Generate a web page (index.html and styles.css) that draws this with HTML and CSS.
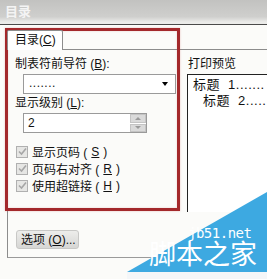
FILE: index.html
```html
<!DOCTYPE html>
<html lang="zh">
<head>
<meta charset="utf-8">
<link rel="stylesheet" href="styles.css">
</head>
<body>
<div class="dialog">
  <div class="titlebar">目录</div>
  <div class="client">
    <div class="tab-strip">
      <div class="tab">目录(<u>C</u>)</div>
    </div>
    <div class="tab-panel">
      <div class="columns">
        <div class="options">
          <div class="label">制表符前导符 (<u>B</u>):</div>
          <div class="select"><span class="select-text">.......</span><span class="arrow"></span></div>
          <div class="label label-2">显示级别 (<u>L</u>):</div>
          <div class="spin">
            <span class="spin-text">2</span>
            <div class="spin-btns">
              <div class="spin-btn"><span class="up"></span></div>
              <div class="spin-btn"><span class="down"></span></div>
            </div>
          </div>
          <div class="checks">
            <div class="check-row"><span class="box"><svg width="9" height="9" viewBox="0 0 9 9"><path d="M1 4.5 L3.5 7 L8 1.5" fill="none" stroke="#a6a6a6" stroke-width="1.6"/></svg></span>显示页码 (<u>S</u>)</div>
            <div class="check-row"><span class="box"><svg width="9" height="9" viewBox="0 0 9 9"><path d="M1 4.5 L3.5 7 L8 1.5" fill="none" stroke="#a6a6a6" stroke-width="1.6"/></svg></span>页码右对齐 (<u>R</u>)</div>
            <div class="check-row"><span class="box"><svg width="9" height="9" viewBox="0 0 9 9"><path d="M1 4.5 L3.5 7 L8 1.5" fill="none" stroke="#a6a6a6" stroke-width="1.6"/></svg></span>使用超链接 (<u>H</u>)</div>
          </div>
        </div>
        <div class="preview">
          <div class="label">打印预览</div>
          <div class="preview-box">
            <div class="toc-1">标题 1.......</div>
            <div class="toc-2">标题 2.....</div>
          </div>
        </div>
      </div>
      <div class="buttons">
        <div class="btn">选项 (<u>O</u>)...</div>
      </div>
    </div>
  </div>
  <div class="highlight"></div>
  <div class="watermark">
    <svg class="wm-shape" width="140" height="87" viewBox="0 0 140 87"><polygon points="0,80 140,0 140,80" fill="#3da9e1"/><rect x="0" y="80" width="140" height="7" fill="#f4f6f8"/></svg>
    <div class="wm-site">jb51.net</div>
    <div class="wm-name">脚本之家</div>
  </div>
</div>
</body>
</html>
```

FILE: styles.css
```css
* { box-sizing: border-box; }
html, body { margin: 0; padding: 0; }
body {
  width: 267px;
  height: 279px;
  overflow: hidden;
  background: #fbfbf9;
  font-family: "Liberation Sans", "Noto Sans CJK SC", sans-serif;
  font-size: 12px;
  color: #111;
}
u { text-decoration: underline; }
.dialog {
  position: relative;
  width: 267px;
  height: 279px;
  overflow: hidden;
}
.titlebar {
  height: 25px;
  padding-left: 5px;
  line-height: 24px;
  font-size: 13px;
  font-weight: bold;
  color: #f4f4f4;
  background: linear-gradient(#c2c2c0 0%, #cfcfcd 70%, #ebebe9 92%);
  border-bottom: 1px solid #4a4a4a;
}
.client {
  padding: 5px 0 0 7px;
}
.tab-strip {
  display: flex;
  height: 19px;
}
.tab {
  width: 56px;
  height: 20px;
  padding-left: 7px;
  line-height: 19px;
  background: #fff;
  border: 1px solid #8c8c8c;
  border-bottom: none;
  border-radius: 2px 2px 0 0;
  position: relative;
  z-index: 1;
  white-space: nowrap;
}
.tab-panel {
  width: 320px;
  height: 209px;
  border-left: 1px solid #8c8c8c;
  border-top: 1px solid #8c8c8c;
  border-bottom: 1px solid #9a9a9a;
  padding: 7px 0 8px 7px;
  display: flex;
  flex-direction: column;
  background: #fbfbf9;
}
.columns {
  display: flex;
  gap: 9px;
}
.options {
  width: 163px;
}
.label {
  height: 14px;
  line-height: 14px;
  white-space: nowrap;
}
.label-2 { margin-top: 2px; }
.select {
  margin: 3px 0 0 8px;
  width: 153px;
  height: 20px;
  border: 1px solid #9a9a9a;
  background: #fff;
  display: flex;
  align-items: center;
  justify-content: space-between;
  padding: 0 7px 0 5px;
}
.select-text { line-height: 12px; margin-top: -3px; letter-spacing: 0.5px; }
.arrow {
  width: 0;
  height: 0;
  border-left: 3.5px solid transparent;
  border-right: 3.5px solid transparent;
  border-top: 4px solid #000;
}
.spin {
  margin: 3px 0 0 8px;
  width: 124px;
  height: 20px;
  border: 1px solid #9a9a9a;
  background: #fff;
  display: flex;
  align-items: center;
  justify-content: space-between;
}
.spin-text { padding-left: 4px; }
.spin-btns {
  width: 16px;
  height: 18px;
  display: flex;
  flex-direction: column;
  gap: 1px;
}
.spin-btn {
  flex: 1;
  background: #dadada;
  border: 1px solid #c4c4c4;
  display: flex;
  align-items: center;
  justify-content: center;
}
.up, .down {
  width: 0;
  height: 0;
  border-left: 3px solid transparent;
  border-right: 3px solid transparent;
}
.up { border-bottom: 3px solid #9a9a9a; }
.down { border-top: 3px solid #9a9a9a; }
.checks {
  margin-top: 10px;
  display: flex;
  flex-direction: column;
}
.check-row {
  height: 17px;
  display: flex;
  align-items: center;
  gap: 4px;
  padding-left: 1px;
  white-space: nowrap;
}
.box {
  width: 12px;
  height: 12px;
  border: 1px solid #b0b0b0;
  background: #e6e6e4;
  display: flex;
  align-items: center;
  justify-content: center;
}
.preview {
  flex: 1;
  padding-left: 1px;
}
.preview-box {
  margin: 3px 0 0 -1px;
  height: 138px;
  border-left: 1px solid #222;
  border-top: 1px solid #222;
  background: #fff;
  padding: 2px 0 0 5px;
  font-size: 13px;
  line-height: 16px;
  white-space: nowrap;
  word-spacing: 4px;
  letter-spacing: 0.5px;
}
.toc-1, .toc-2 { height: 16px; }
.toc-2 { padding-left: 10px; }
.buttons {
  margin-top: auto;
  display: flex;
}
.btn {
  margin-left: 1px;
  width: 63px;
  height: 19px;
  line-height: 18px;
  padding-left: 4px;
  background: linear-gradient(#ededeb, #d6d6d4);
  border: 1px solid #c8c8c6;
  border-radius: 3px;
  white-space: nowrap;
}
.highlight {
  position: absolute;
  left: 5px;
  top: 28px;
  width: 175px;
  height: 183px;
  border: 3px solid #a3282b;
  box-shadow: 0 0 2px rgba(200, 90, 90, 0.35), inset 0 0 2px rgba(200, 90, 90, 0.3);
}
.watermark {
  position: absolute;
  right: 0;
  bottom: 0;
  width: 140px;
  height: 87px;
}
.wm-shape { display: block; }
.wm-site {
  position: absolute;
  left: 61px;
  top: 34px;
  height: 15px;
  font-family: "DejaVu Sans Mono", monospace;
  font-size: 14px;
  line-height: 15px;
  color: #fff;
  letter-spacing: -0.5px;
}
.wm-name {
  position: absolute;
  left: 22px;
  top: 50px;
  height: 27px;
  font-family: "Liberation Sans", "Noto Sans CJK SC", sans-serif;
  font-size: 27px;
  line-height: 27px;
  color: #fff;
  white-space: nowrap;
}
```
